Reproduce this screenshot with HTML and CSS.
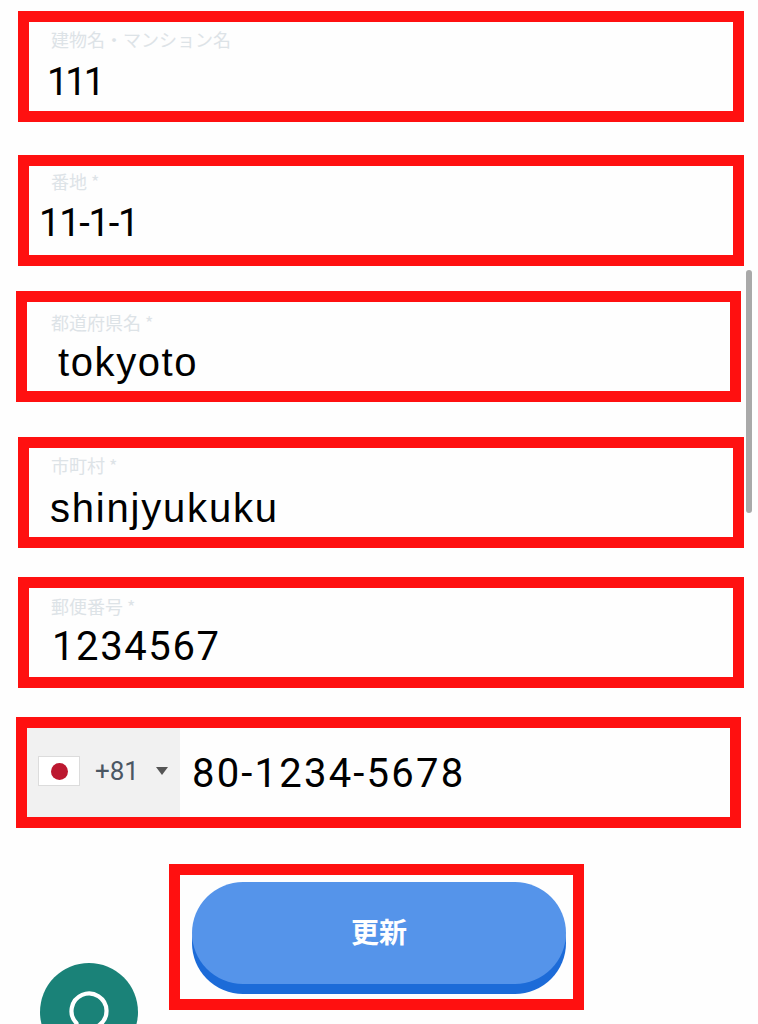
FILE: index.html
```html
<!DOCTYPE html>
<html lang="ja">
<head>
<meta charset="utf-8">
<title>住所の更新</title>
<link rel="stylesheet" href="styles.css">
</head>
<body>
<form class="form">
  <div class="field field-a gap-1">
    <span class="label label-1">建物名・マンション名</span>
    <span class="value digits value-1">111</span>
  </div>
  <div class="field field-a gap-2">
    <span class="label label-2">番地 *</span>
    <span class="value digits value-2">11-1-1</span>
  </div>
  <div class="field field-b gap-3">
    <span class="label label-3">都道府県名 *</span>
    <span class="value value-3">tokyoto</span>
  </div>
  <div class="field field-a gap-4">
    <span class="label label-4">市町村 *</span>
    <span class="value value-4">shinjyukuku</span>
  </div>
  <div class="field field-a gap-5">
    <span class="label label-5">郵便番号 *</span>
    <span class="value digits value-5">1234567</span>
  </div>
  <div class="field field-b gap-6 phone">
    <div class="dial">
      <span class="flag"><span class="sun"></span></span>
      <span class="code">+81</span>
      <span class="caret"></span>
    </div>
    <span class="value digits value-6">80-1234-5678</span>
  </div>
  <div class="submit-box">
    <button class="submit" type="button">更新</button>
  </div>
</form>
<div class="scrollbar"></div>
<div class="chat">
  <svg class="chat-icon" viewBox="0 0 40 48" width="40" height="48" aria-hidden="true">
    <path d="M7.600 32.300A17.500 17.500 0 1 1 14 36.400L7 42z" fill="none" stroke="#fff" stroke-width="4.200" stroke-linejoin="round"/>
  </svg>
</div>
</body>
</html>
```
FILE: styles.css
```css
html, body {
  margin: 0;
  padding: 0;
  height: 1024px;
  overflow: hidden;
  background: #fefefe;
}
body {
  position: relative;
  font-family: "Liberation Sans", "Noto Sans CJK JP", sans-serif;
}
.form {
  display: flex;
  flex-direction: column;
  align-items: flex-start;
}
.field {
  box-sizing: border-box;
  height: 111px;
  border: 11px solid #ff1010;
  background: #fefefe;
  display: flex;
  flex-direction: column;
}
.field-a { margin-left: 18px; width: 726px; }
.field-b { margin-left: 16px; width: 725px; }
.gap-1 { margin-top: 11px; }
.gap-2 { margin-top: 33px; }
.gap-3 { margin-top: 25px; }
.gap-4 { margin-top: 35px; }
.gap-5 { margin-top: 29px; }
.gap-6 { margin-top: 29px; }
.label {
  font-family: "Noto Sans CJK JP", sans-serif;
  font-size: 18px;
  line-height: 24px;
  color: #dde3e7;
  margin-left: 22px;
}
.label-1 { margin-top: 5px; }
.label-2 { margin-top: 3px; }
.label-3 { margin-top: 8px; margin-left: 24px; }
.label-4 { margin-top: 5px; }
.label-5 { margin-top: 6px; }
.value {
  font-size: 40px;
  line-height: 42px;
  color: #000;
  letter-spacing: 1.600px;
}
.digits { font-family: "Roboto", "Liberation Sans", sans-serif; }
.value-1 { margin: 10px 0 0 18px; font-size: 38px; letter-spacing: -3px; }
.value-2 { margin: 9px 0 0 10px; font-size: 38px; letter-spacing: -1.200px; }
.value-3 { margin: 7px 0 0 31px; }
.value-4 { margin: 10px 0 0 21px; letter-spacing: 1.800px; }
.value-5 { margin: 8px 0 0 23px; letter-spacing: 1.600px; }
.value-6 { margin: 3px 0 0 12px; letter-spacing: 2.200px; }
.phone { flex-direction: row; align-items: center; }
.dial {
  align-self: stretch;
  width: 153px;
  background: #f1f1f1;
  display: flex;
  align-items: center;
  box-sizing: border-box;
  padding: 0 0 3px 11px;
}
.flag {
  box-sizing: border-box;
  width: 42px;
  height: 30px;
  background: #fff;
  border: 1px solid #dcdcdc;
  display: flex;
  align-items: center;
  justify-content: center;
}
.sun {
  width: 17px;
  height: 17px;
  border-radius: 50%;
  background: #bc1830;
}
.code {
  margin-left: 15px;
  font-family: "Roboto", sans-serif;
  font-size: 26px;
  color: #4b5763;
}
.caret {
  margin-left: 17px;
  width: 0;
  height: 0;
  border-left: 6px solid transparent;
  border-right: 6px solid transparent;
  border-top: 8px solid #555;
}
.submit-box {
  box-sizing: border-box;
  margin: 36px 0 0 169px;
  width: 415px;
  height: 146px;
  border: 11px solid #ff1010;
  padding: 7px 0 0 12px;
}
.submit {
  display: block;
  width: 374px;
  height: 102px;
  padding: 0 0 5px;
  border: 0;
  border-radius: 51px;
  background: #5594ea;
  box-shadow: 0 10px 0 #1c6bd8;
  color: #fff;
  font-family: "Noto Sans CJK JP", sans-serif;
  font-size: 28px;
  font-weight: 700;
}
.scrollbar {
  position: absolute;
  left: 746px;
  top: 270px;
  width: 6px;
  height: 243px;
  border-radius: 3px;
  background: #a9a9a9;
}
.chat {
  position: absolute;
  left: 40px;
  top: 963px;
  width: 98px;
  height: 98px;
  border-radius: 50%;
  background: #1a8278;
  display: flex;
  justify-content: center;
  align-items: flex-start;
}
.chat-icon {
  margin-top: 28px;
}
```
